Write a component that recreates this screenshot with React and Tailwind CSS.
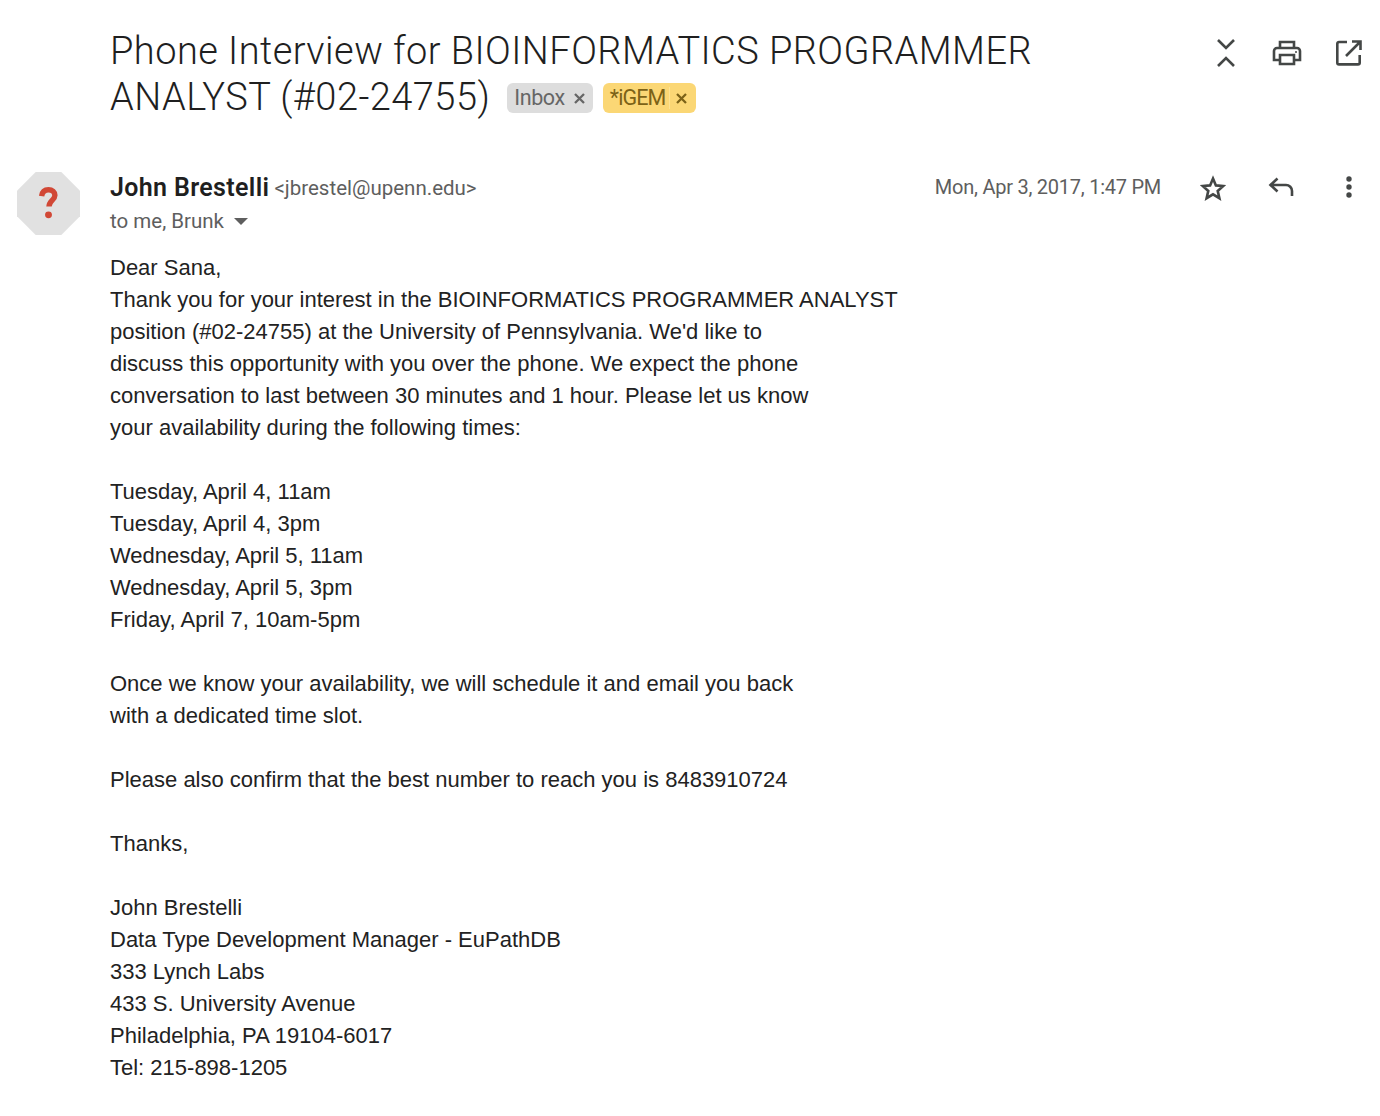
const times = ['Tuesday, April 4, 11am', 'Tuesday, April 4, 3pm', 'Wednesday, April 5, 11am', 'Wednesday, April 5, 3pm', 'Friday, April 7, 10am-5pm']
const sig = ['John Brestelli', 'Data Type Development Manager - EuPathDB', '333 Lynch Labs', '433 S. University Avenue', 'Philadelphia, PA 19104-6017', 'Tel: 215-898-1205']

function Lines({ items }) {
  return items.map(l => <div key={l}>{l}</div>)
}

function Collapse() {
  return (
    <svg width="24" height="32" viewBox="0 0 24 32" fill="none" stroke="#444746" strokeWidth="2.6">
      <path d="M4 3l8 8 8-8M4 29l8-8 8 8" />
    </svg>
  )
}

function Printer() {
  return (
    <svg width="30" height="26" viewBox="0 0 30 26" fill="none" stroke="#444746" strokeWidth="2.6">
      <path d="M8 8V2h14v6M8 20H2V11a3 3 0 0 1 3-3h20a3 3 0 0 1 3 3v9h-6" />
      <path d="M8 15h14v9H8z" />
      <circle cx="24" cy="12" r="1" fill="#444746" stroke="none" />
    </svg>
  )
}

function External() {
  return (
    <svg width="26" height="26" viewBox="0 0 26 26" fill="none" stroke="#444746" strokeWidth="2.6">
      <path d="M11 2H3a1.7 1.7 0 0 0-1.7 1.7v19A1.7 1.7 0 0 0 3 24.4h19a1.7 1.7 0 0 0 1.7-1.7V15" />
      <path d="M16 1.5h8.5V10M24 2L10 16" />
    </svg>
  )
}

function Star() {
  return (
    <svg width="26" height="26" viewBox="0 0 26 26" fill="none" stroke="#444746" strokeWidth="2.6">
      <path d="M13 3.5l2.9 6.9 7.4.6-5.6 4.9 1.7 7.3-6.4-3.9-6.4 3.9 1.7-7.3-5.6-4.9 7.4-.6z" />
    </svg>
  )
}

function Reply() {
  return (
    <svg width="26" height="20" viewBox="0 0 26 20" fill="none" stroke="#444746" strokeWidth="2.6">
      <path d="M9.5 1.5L2.5 8l7 6.5M3 8h15a6 6 0 0 1 6 6v5" />
    </svg>
  )
}

function Dots() {
  return (
    <svg width="8" height="22" viewBox="0 0 8 22" fill="#444746">
      <circle cx="4" cy="3" r="2.7" />
      <circle cx="4" cy="11" r="2.7" />
      <circle cx="4" cy="19" r="2.7" />
    </svg>
  )
}

function Avatar() {
  return (
    <svg width="63" height="63" viewBox="0 0 64 64">
      <path d="M19 0h26l19 19v26L45 64H19L0 45V19z" fill="#e1e1e1" />
      <path d="M25 24.500c.6-4.300 3.200-6.500 7-6.500 3.800 0 6.500 2.300 6.500 5.700 0 5-6 5.500-6 11.300" fill="none" stroke="#d14836" strokeWidth="5.500" />
      <circle cx="32" cy="43.500" r="3.500" fill="#d14836" />
    </svg>
  )
}

function Label({ text, className, x, divider }) {
  return (
    <span className={`inline-flex h-[30px] items-center rounded-[6px] pl-[7px] font-['Roboto',sans-serif] text-[21.5px] font-normal leading-none ${className}`}>
      <span className={divider}>{text}</span>
      <svg className={x} width="11" height="11" viewBox="0 0 11 11" fill="none" stroke="currentColor" strokeWidth="2.300">
        <path d="M1 1l9 9M10 1l-9 9" />
      </svg>
    </span>
  )
}

export default function App() {
  return (
    <div className="h-[1116px] w-[1380px] overflow-hidden bg-white font-['Liberation_Sans',sans-serif] text-[#222222]">
      <div className="flex items-start justify-between pl-[110px] pr-[18px] pt-[28px]">
        <h1 className="font-['Roboto',sans-serif] text-[38px] font-light leading-[46px] tracking-[0.45px] text-[#1f1f1f]">
          <div>Phone Interview for BIOINFORMATICS PROGRAMMER</div>
          <div className="flex items-center">
            <span className="mr-[17px]">ANALYST (#02-24755)</span>
            <Label text="Inbox" className="relative top-[1px] bg-[#dddddd] tracking-[-0.4px] text-[#666666]" x="ml-[9px] mr-[8px]" />
            <Label text="*iGEM" className="relative top-[1px] ml-[10px] bg-[#fbd775] tracking-[-0.9px] text-[#7c6217]" divider="border-r border-[#fde293] pr-[4px]" x="ml-[6px] mr-[9px]" />
          </div>
        </h1>
        <div className="flex items-center pt-[9px]">
          <Collapse />
          <div className="ml-[34px]"><Printer /></div>
          <div className="ml-[34px]"><External /></div>
        </div>
      </div>

      <div className="mt-[52px] flex items-start pl-[17px] pr-[27px]">
        <Avatar />
        <div className="ml-[30px] flex-1">
          <div className="flex items-start justify-between">
            <div className="font-['Roboto',sans-serif]">
              <div className="flex items-baseline leading-[30px]">
                <span className="relative top-[1px] text-[25px] font-semibold tracking-[0.35px] text-[#1f1f1f]">John Brestelli</span>
                <span className="ml-[5px] text-[20.5px] text-[#5e5e5e]">&lt;jbrestel@upenn.edu&gt;</span>
              </div>
              <div className="mt-[3px] flex items-center text-[20.5px] leading-[30px] text-[#5e5e5e]">
                to me, Brunk
                <span className="ml-[10px] h-0 w-0 border-x-[7px] border-t-[7px] border-x-transparent border-t-[#5e5e5e]" />
              </div>
            </div>
            <div className="flex items-center">
              <span className="font-['Roboto',sans-serif] text-[20px] leading-[30px] tracking-[-0.25px] text-[#5e5e5e]">Mon, Apr 3, 2017, 1:47 PM</span>
              <div className="ml-[39px] mt-[2px]"><Star /></div>
              <div className="ml-[42px]"><Reply /></div>
              <div className="ml-[51px]"><Dots /></div>
            </div>
          </div>
        </div>
      </div>

      <div className="mt-[16px] pl-[110px] text-[22px] leading-[32px]">
        <div>Dear Sana,</div>
        <div>Thank you for your interest in the BIOINFORMATICS PROGRAMMER ANALYST</div>
        <div>position (#02-24755) at the University of Pennsylvania. We'd like to</div>
        <div>discuss this opportunity with you over the phone. We expect the phone</div>
        <div>conversation to last between 30 minutes and 1 hour. Please let us know</div>
        <div>your availability during the following times:</div>
        <div className="mt-[32px]"><Lines items={times} /></div>
        <div className="mt-[32px]">Once we know your availability, we will schedule it and email you back</div>
        <div>with a dedicated time slot.</div>
        <div className="mt-[32px]">Please also confirm that the best number to reach you is 8483910724</div>
        <div className="mt-[32px]">Thanks,</div>
        <div className="mt-[32px]"><Lines items={sig} /></div>
      </div>
    </div>
  )
}
